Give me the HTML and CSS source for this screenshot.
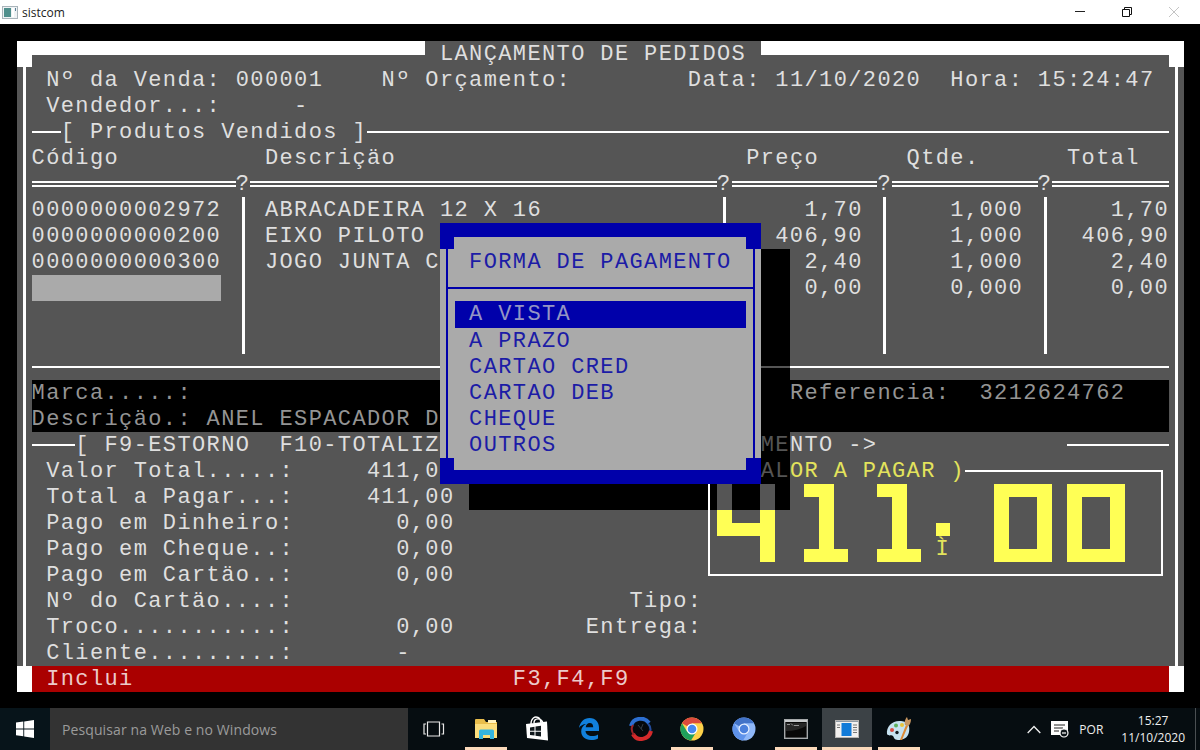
FILE: index.html
```html
<!DOCTYPE html>
<html lang="pt-br">
<head>
  <meta charset="UTF-8" />
  <meta name="viewport" content="width=device-width, initial-scale=1" />
  <title>sistcom</title>
  <link rel="stylesheet" href="styles.css">
</head>
<body>
  <header class="titulo-janela">
    <svg class="icone-app" width="16" height="13" viewBox="0 0 16 13">
      <rect x=".5" y=".5" width="15" height="12" fill="#eef2f4" stroke="#a9b4ba"/>
      <rect x="2" y="2" width="7" height="9" fill="#4f8f8c"/>
      <rect x="10" y="2" width="2" height="9" fill="#fff"/>
      <path d="M13.500 2v3" stroke="#5a7f95"/>
    </svg>
    <span class="nome">sistcom</span>
    <div class="controles">
      <svg width="12" height="12" viewBox="0 0 12 12"><path d="M1 5.500h10" stroke="#222"/></svg>
      <svg width="12" height="12" viewBox="0 0 12 12" fill="none" stroke="#111"><path d="M1.500 3.500h7v7h-7zM3.500 3.500v-2h7v7h-2"/></svg>
      <svg width="12" height="12" viewBox="0 0 12 12" stroke="#c4c4c4"><path d="M1 1l10 10M11 1L1 11"/></svg>
    </div>
  </header>

  <main class="console">
    <div class="tela">
      <div class="sombra"></div>

      <div class="linha topo">
        <i class="canto"></i><i class="meia m27"></i>
        <span class="titulo"> LANÇAMENTO DE PEDIDOS </span>
        <i class="meia"></i><i class="canto"></i>
      </div>

      <div class="corpo">
        <div class="linha"> Nº da Venda: 000001    Nº Orçamento:        Data: 11/10/2020  Hora: 15:24:47</div>
        <div class="linha"> Vendedor...:     -</div>
        <div class="linha"><i class="traco t2"></i>[ Produtos Vendidos ]<i class="traco"></i></div>
        <div class="linha">Código          Descriçäo                        Preço      Qtde.      Total</div>
        <div class="linha"><i class="duplo d14"></i>?<i class="duplo d32"></i>?<i class="duplo d10"></i>?<i class="duplo d10"></i>?<i class="duplo"></i></div>

        <div class="produtos">
          <div class="codigo">
            <div class="linha">0000000002972</div>
            <div class="linha">0000000000200</div>
            <div class="linha">0000000000300</div>
            <div class="linha campo"></div>
          </div>
          <i class="barra"></i>
          <div>
            <div class="linha"> ABRACADEIRA 12 X 16</div>
            <div class="linha"> EIXO PILOTO</div>
            <div class="linha"> JOGO JUNTA C</div>
          </div>
          <i class="barra"></i>
          <div class="valor">
            <div class="linha">1,70 </div>
            <div class="linha">406,90 </div>
            <div class="linha">2,40 </div>
            <div class="linha">0,00 </div>
          </div>
          <i class="barra"></i>
          <div class="valor">
            <div class="linha">1,000 </div>
            <div class="linha">1,000 </div>
            <div class="linha">1,000 </div>
            <div class="linha">0,000 </div>
          </div>
          <i class="barra"></i>
          <div class="valor">
            <div class="linha">1,70</div>
            <div class="linha">406,90</div>
            <div class="linha">2,40</div>
            <div class="linha">0,00</div>
          </div>
        </div>

        <div class="linha"><i class="traco t50"></i><i class="traco t2 apagado"></i><i class="traco"></i></div>

        <div class="detalhe">
          <div class="linha">Marca.....:<i class="vao v41"></i><span>Referencia:  3212624762</span></div>
          <div class="linha">Descriçäo.: ANEL ESPACADOR D</div>
        </div>

        <div class="linha"><i class="traco t3"></i>[ F9-ESTORNO  F10-TOTALIZ<i class="vao v22"></i><span class="dim">ME</span>NTO -&gt;<i class="vao v13"></i><i class="traco"></i></div>

        <div class="rodape">
          <div class="totais">
            <div class="linha"> Valor Total.....:     411,0</div>
            <div class="linha"> Total a Pagar...:     411,00</div>
            <div class="linha"> Pago em Dinheiro:       0,00</div>
            <div class="linha"> Pago em Cheque..:       0,00</div>
            <div class="linha"> Pago em Cartäo..:       0,00</div>
            <div class="linha"> Nº do Cartäo....:                       Tipo:</div>
            <div class="linha"> Troco...........:       0,00         Entrega:</div>
            <div class="linha"> Cliente.........:       -</div>
          </div>
          <div class="pagar">
            <div class="linha legenda"><i class="vao v4"></i><span class="dim">AL</span>OR A PAGAR )<i class="aresta"></i></div>
            <div class="caixa" role="img" aria-label="411.00">
              <i class="digito quatro"></i>
              <i class="digito um"></i>
              <i class="digito um"></i>
              <div class="ponto"><i></i><span>Ì</span></div>
              <i class="digito zero"></i>
              <i class="digito zero"></i>
            </div>
          </div>
        </div>
      </div>

      <div class="linha status"><i class="canto"></i> Inclui                          F3,F4,F9<i class="canto fim"></i></div>

      <div class="menu">
        <div class="menu-borda"><i class="canto"></i><i class="meia"></i><i class="canto"></i></div>
        <div class="menu-corpo">
          <div class="linha menu-titulo">FORMA DE PAGAMENTO</div>
          <div class="linha divisor"></div>
          <div class="linha item ativo">A VISTA</div>
          <div class="linha item">A PRAZO</div>
          <div class="linha item">CARTAO CRED</div>
          <div class="linha item">CARTAO DEB</div>
          <div class="linha item">CHEQUE</div>
          <div class="linha item">OUTROS</div>
        </div>
        <div class="menu-borda baixo"><i class="canto"></i><i class="meia"></i><i class="canto"></i></div>
      </div>
    </div>
  </main>

  <footer class="barra-tarefas">
    <div class="iniciar">
      <svg width="18" height="18" viewBox="0 0 18 18" fill="#fff">
        <path d="M0 2.600L7.300 1.600V8.500H0zM8.200 1.500L18 0V8.500H8.200zM0 9.400H7.300V16.300L0 15.300zM8.200 9.400H18V18L8.200 16.500z"/>
      </svg>
    </div>
    <div class="busca">Pesquisar na Web e no Windows</div>
    <div class="apps">
      <div class="app">
        <svg width="22" height="18" viewBox="0 0 22 18" fill="none" stroke="#e8e8e8" stroke-width="1.200"><path d="M4.500 2h12v14h-12zM3 4H1v10h2M18.500 4h2v10h-2"/></svg>
      </div>
      <div class="app aberto">
        <svg width="24" height="22" viewBox="0 0 24 22">
          <path d="M1 2q0-1 1-1h8l2 3h11v16H1z" fill="#e9bd4b"/>
          <path d="M1 6h22v14H1z" fill="#fbdd7c"/>
          <path d="M14 2h8v3h-8z" fill="#fff1bd"/>
          <path d="M5 21v-8q0-1.500 1.500-1.500h12q1.500 0 1.500 1.500v8h-4v-4H9v4z" fill="#35b5df"/>
        </svg>
      </div>
      <div class="app">
        <svg width="24" height="26" viewBox="0 0 24 26">
          <path d="M6 8C6 2 10 0 13 1.500S16 5 16 7M9 7c0-5 7-6 9 0" fill="none" stroke="#fff" stroke-width="1.400"/>
          <path d="M1 8L22 5.500l1 19L2 22z" fill="#fff"/>
          <path d="M5 11.500l4.500-.7v3.900H5zM10.500 10.600l5.500-.8v4.900h-5.500zM5 15.700h4.500v3.800L5 19zM10.500 15.700H16v4.700l-5.500-.7z" fill="#10181c"/>
        </svg>
      </div>
      <div class="app">
        <svg width="22" height="22" viewBox="0 0 22 22">
          <path d="M1 10C2 4 6 0 11.500 0 18 0 21 5 21 9.500V13H7.500c.3 3.500 3 5 6.500 5 2.500 0 4.500-.7 6-1.600V20.500c-2 1-4 1.500-7 1.500-6 0-9.800-4-9.800-8.500C3.200 10 5 7.500 8 6 5 6.200 2.500 7.500 1 10zM7.700 9.300h7.500C15.200 6.500 14 5 11.700 5 9.500 5 8 6.800 7.700 9.300z" fill="#1180dc"/>
        </svg>
      </div>
      <div class="app">
        <svg width="24" height="24" viewBox="0 0 24 24" fill="none">
          <circle cx="12" cy="12" r="7.500" fill="#05080b"/>
          <path d="M2 9C4 1 15-1 20 6" stroke="#2c6fd1" stroke-width="4"/>
          <path d="M19 6.500C22 10 22 14 20 17" stroke="#244c9c" stroke-width="2"/>
          <path d="M22 14C20 23 8 25 4 17" stroke="#d42a2b" stroke-width="4"/>
          <path d="M5 18C2 14 2 11 4 8" stroke="#9c2428" stroke-width="2"/>
          <path d="M9 8l5 6M14 7l-2 5" stroke="#333b44"/>
        </svg>
      </div>
      <div class="app aberto">
        <svg width="24" height="24" viewBox="0 0 24 24">
          <circle cx="12" cy="12" r="11.500" fill="#fdd14a"/>
          <path d="M12 12L2 6.200A11.500 11.500 0 0 1 22 6.300H12z" fill="#dc4a3d"/>
          <path d="M2 6.200A11.500 11.500 0 0 0 11 23.500L16.500 14.500 7 14.600z" fill="#1f9f5b"/>
          <circle cx="12" cy="12" r="5.500" fill="#fff"/>
          <circle cx="12" cy="12" r="4.300" fill="#4688f1"/>
        </svg>
      </div>
      <div class="app">
        <svg width="24" height="24" viewBox="0 0 24 24">
          <circle cx="12" cy="12" r="11.500" fill="#8fb7f8"/>
          <path d="M12 12L2 6.200A11.500 11.500 0 0 1 22 6.300H12z" fill="#4273c8"/>
          <path d="M2 6.200A11.500 11.500 0 0 0 11 23.500L16.500 14.500 7 14.600z" fill="#5e92ea"/>
          <circle cx="12" cy="12" r="5.500" fill="#e8f0ff"/>
          <circle cx="12" cy="12" r="4.300" fill="#4b80dc"/>
        </svg>
      </div>
      <div class="app aberto">
        <svg width="24" height="20" viewBox="0 0 24 20">
          <rect x=".7" y=".7" width="22.600" height="18.600" fill="#080808" stroke="#a5a8aa" stroke-width="1.400"/>
          <path d="M1 2h22" stroke="#c8cbcd" stroke-width="2"/>
          <path d="M3 5.500h3M7 4.500l2 2M10 6.500h5" stroke="#e5e5e5"/>
          <path d="M2 12Q14 12 22 7V4H2z" fill="#444" opacity=".5"/>
        </svg>
      </div>
      <div class="app aberto foco">
        <svg width="24" height="18" viewBox="0 0 24 18">
          <rect x=".5" y=".5" width="23" height="17" fill="#f3f1ef" stroke="#b7b5b3"/>
          <path d="M1 1.500h22" stroke="#8e9aa5"/>
          <rect x="6.500" y="3" width="10" height="13" fill="#127bd8"/>
          <path d="M2 5h3M2 7.500h3M18 5h4M18 7.500h4M18 10h4M18 12.500h4" stroke="#777"/>
        </svg>
      </div>
      <div class="app aberto">
        <svg width="26" height="24" viewBox="0 0 26 24">
          <path d="M1 17C0 9 7 3 15 4c8 .5 9 6 8 11-1 6-6 8-11 8-4 0-4-3-5-4-2-2-4 1-6-2z" fill="#c6e2f0"/>
          <circle cx="6" cy="13" r="2" fill="#d94c42"/>
          <circle cx="10" cy="8.500" r="2" fill="#5db05d"/>
          <circle cx="16" cy="8" r="2" fill="#e9c53a"/>
          <circle cx="11" cy="15.500" r="1.700" fill="#111a20"/>
          <path d="M14 23L20 8l2 1-6 14z" fill="#dd8a35"/>
          <path d="M19 8c-1-4 1-7 2-8l1 3 3-1c0 3-1 6-3 7z" fill="#c99760"/>
        </svg>
      </div>
    </div>
    <div class="bandeja">
      <svg width="14" height="9" viewBox="0 0 14 9" fill="none" stroke="#eee" stroke-width="1.300"><path d="M.7 8L7 1.500 13.300 8"/></svg>
      <svg width="18" height="18" viewBox="0 0 18 18">
        <path d="M0 1h17v14H0z" fill="#fff"/>
        <path d="M3 5h11M3 8h9M3 11h5" stroke="#222"/>
        <circle cx="13" cy="13" r="4" fill="#10181c" stroke="#fff" stroke-width="1.200"/>
        <path d="M11 13h4" stroke="#fff" stroke-width="1.200"/>
      </svg>
      <span class="idioma">POR</span>
      <div class="relogio"><span>15:27</span><span>11/10/2020</span></div>
    </div>
    <i class="mostrar-area"></i>
  </footer>
</body>
</html>
```

FILE: styles.css
```css
:root {
  --c: 14.583px;
  --l: 26.05px;
  --fundo: #555;
  --azul: #0000aa;
  --amarelo: #ffff55;
}

* {
  box-sizing: border-box;
}

body {
  margin: 0;
  width: 1200px;
  height: 750px;
  overflow: hidden;
  background: #000;
  font-family: "Open Sans", "Noto Sans", sans-serif;
  display: flex;
  flex-direction: column;
}

.titulo-janela {
  height: 24px;
  background: #fff;
  display: flex;
  align-items: center;
  padding: 0 20px 0 2px;
}

.icone-app {
  margin-right: 4px;
}

.nome {
  font-size: 12px;
  color: #222;
}

.controles {
  margin-left: auto;
  display: flex;
  gap: 35px;
}

/* console: 80 colunas x 25 linhas */
.console {
  flex: 1;
  padding: 17px 0 0 17px;
}

.tela {
  position: relative;
  width: calc(var(--c) * 80);
  height: calc(var(--l) * 25);
  background: var(--fundo);
  color: #dfdfdf;
  font-family: "Courier New", "Liberation Mono", monospace;
  font-size: 22px;
  letter-spacing: 1.381px;
}

.linha {
  display: flex;
  height: var(--l);
  line-height: calc(var(--l) + 2px);
  white-space: pre;
}

.canto {
  width: var(--c);
  height: var(--l);
  background: #fff;
  flex: none;
}

.meia {
  flex: 1;
  height: 13.500px;
  background: #fff;
}

.m27 {
  flex: none;
  width: calc(var(--c) * 27);
}

.corpo {
  position: relative;
  height: calc(var(--l) * 23);
  padding: 0 var(--c);
  background:
    linear-gradient(#fff, #fff) 6px 0 / 3px 100% no-repeat,
    linear-gradient(#fff, #fff) calc(100% - 6px) 0 / 3px 100% no-repeat;
}

.traco {
  flex: 1;
  height: 2px;
  align-self: center;
  background: #fff;
}

.t2,
.t3,
.t50 {
  flex: none;
}

.t2 { width: calc(var(--c) * 2); }
.t3 { width: calc(var(--c) * 3); }
.t50 { width: calc(var(--c) * 50); }

.apagado {
  background: var(--fundo);
}

.duplo {
  flex: 1;
  height: 6px;
  align-self: center;
  border: solid #fff;
  border-width: 2px 0;
}

.d14,
.d32,
.d10 {
  flex: none;
}

.d14 { width: calc(var(--c) * 14); }
.d32 { width: calc(var(--c) * 32); }
.d10 { width: calc(var(--c) * 10); }

.produtos {
  height: calc(var(--l) * 6);
  display: grid;
  grid-template-columns:
    calc(var(--c) * 14) var(--c) calc(var(--c) * 32) var(--c)
    calc(var(--c) * 10) var(--c) calc(var(--c) * 10) var(--c) 1fr;
}

.barra {
  width: 3px;
  justify-self: center;
  background: #fff;
}

.campo {
  width: calc(var(--c) * 13);
  background: #aaa;
}

.valor .linha {
  justify-content: flex-end;
}

.detalhe {
  background: #000;
  color: #949494;
}

.vao {
  flex: none;
}

.v4 { width: calc(var(--c) * 4); }
.v13 { width: calc(var(--c) * 13); }
.v22 { width: calc(var(--c) * 22); }
.v41 { width: calc(var(--c) * 41); }

.dim {
  color: var(--fundo);
}

.rodape {
  display: flex;
}

.totais {
  width: calc(var(--c) * 46);
}

.pagar {
  width: calc(var(--c) * 32);
}

.legenda {
  color: #e3e35c;
}

.aresta {
  flex: 1;
  margin-right: 6px;
  align-self: flex-end;
  height: 14px;
  border: solid #fff;
  border-width: 2px 2px 0 0;
}

.caixa {
  display: flex;
  height: calc(var(--l) * 3.5 + 1px);
  margin: 0 6px;
  padding-left: 6.500px;
  border: solid #fff;
  border-width: 0 2px 2px;
}

/* digitos grandes: 3 linhas de altura, tracos de meia linha */
.digito {
  flex: none;
  height: calc(var(--l) * 3);
  background-repeat: no-repeat;
}

.quatro {
  width: calc(var(--c) * 4);
  margin-right: calc(var(--c) * 2);
  background-image:
    linear-gradient(var(--fundo) 50%, var(--amarelo) 50%),
    linear-gradient(var(--fundo) 33.330%, var(--amarelo) 33.330%),
    linear-gradient(var(--amarelo), var(--amarelo));
  background-position: 0 0, 100% 0, 0 60%;
  background-size: 15px 52px, 15px 100%, 100% 13px;
}

.um {
  width: calc(var(--c) * 3);
  margin-right: calc(var(--c) * 2);
  background-image:
    linear-gradient(var(--amarelo), var(--amarelo)),
    linear-gradient(var(--amarelo), var(--amarelo)),
    linear-gradient(var(--amarelo), var(--amarelo));
  background-position: 0 0, 50% 0, 0 100%;
  background-size: 29px 13px, 15px 100%, 100% 13px;
}

.um + .um {
  margin-right: var(--c);
}

.ponto {
  width: var(--c);
  margin-right: calc(var(--c) * 3);
  padding-top: calc(var(--l) * 1.5);
  color: #e3e35c;
  line-height: calc(var(--l) + 2px);
}

.ponto i {
  display: block;
  height: 13px;
  background: var(--amarelo);
}

.zero {
  width: calc(var(--c) * 4);
  margin-right: var(--c);
  border: solid var(--amarelo);
  border-width: 13px 15px;
}

.status {
  background: #a00;
  color: #eccaca;
}

.fim {
  margin-left: auto;
}

/* menu sobre a tela */
.sombra {
  position: absolute;
  left: calc(var(--c) * 31);
  top: calc(var(--l) * 8);
  width: calc(var(--c) * 22);
  height: calc(var(--l) * 10);
  background: #000;
}

.menu {
  position: absolute;
  left: calc(var(--c) * 29);
  top: calc(var(--l) * 7);
  width: calc(var(--c) * 22);
  height: calc(var(--l) * 10);
  background: #aaa;
  color: #1c1ca6;
}

.menu-borda {
  display: flex;
}

.baixo {
  align-items: flex-end;
}

.menu .canto,
.menu .meia {
  background: var(--azul);
}

.menu-corpo {
  margin: 0 6px;
  padding: 0 6.600px;
  border: solid var(--azul);
  border-width: 0 2px;
}

.menu-titulo,
.item {
  padding-left: var(--c);
}

.divisor {
  margin: 0 -6.600px;
  align-items: center;
}

.divisor::before {
  content: "";
  flex: 1;
  height: 2px;
  background: var(--azul);
}

.ativo {
  background: var(--azul);
  color: #9494c4;
}

/* barra de tarefas */
.barra-tarefas {
  height: 42px;
  background: #060d11;
  display: flex;
  color: #eee;
}

.iniciar {
  width: 50px;
  background: #07141a;
  display: flex;
  align-items: center;
  justify-content: center;
}

.busca {
  width: 358px;
  background: #333;
  color: #9b9b9b;
  font-size: 14px;
  letter-spacing: .1px;
  line-height: 43px;
  padding-left: 12px;
}

.apps {
  display: flex;
}

.app {
  width: 51.700px;
  display: flex;
  align-items: center;
  justify-content: center;
  border: solid transparent;
  border-width: 3px 0;
}

.aberto {
  background: linear-gradient(#fbd9bb, #fbd9bb) center bottom / 42px 3px no-repeat border-box;
}

.foco {
  background:
    linear-gradient(#fbd9bb, #fbd9bb) center bottom / 50px 3px no-repeat border-box,
    linear-gradient(#3c4246, #3c4246) center / 50px 100% no-repeat border-box;
}

.bandeja {
  margin-left: auto;
  padding-right: 10px;
  display: flex;
  align-items: center;
  font-size: 12px;
}

.bandeja svg {
  margin-right: 10px;
}

.idioma {
  margin-right: 18px;
}

.relogio {
  display: flex;
  flex-direction: column;
  align-items: center;
  line-height: 17px;
}

.mostrar-area {
  width: 5px;
  border-left: 1px solid #4a4f52;
}
```
